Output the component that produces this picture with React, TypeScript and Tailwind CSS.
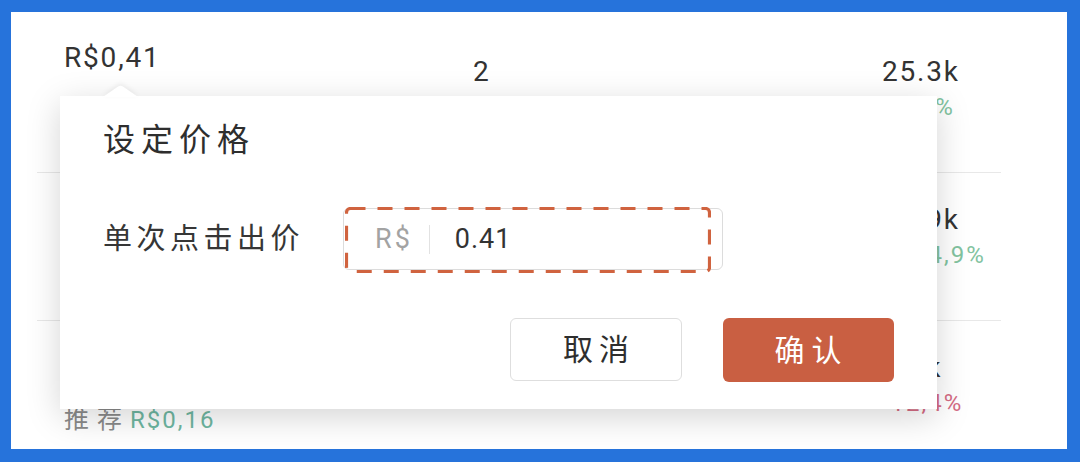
import React from "react";

type Row = {
  price: string;
  suggest: string;
  clicks: string;
  views: string;
  change: string;
  up: boolean;
};

const ROWS: Row[] = [
  { price: "R$0,41", suggest: "R$0,22", clicks: "2", views: "25.3k", change: "+4,2%", up: true },
  { price: "R$0,35", suggest: "R$0,19", clicks: "1", views: "13.9k", change: "+114,9%", up: true },
  { price: "R$0,30", suggest: "R$0,16", clicks: "0", views: "8.6k", change: "-12,4%", up: false },
];

function TableRow({ row }: { row: Row }) {
  return (
    <div className="flex h-[148px] border-b border-[#e8e8e8]">
      {/* Price column */}
      <div className="flex w-[436px] flex-col pl-[27px] pt-[16px]">
        <span className="text-[28px] leading-[34px] tracking-[1.8px] text-[#333]">{row.price}</span>
        <span className="mt-[35px] leading-[28px]">
          <span className="text-[25px] tracking-[8px] text-[#8a8a8a]">推荐</span>
          <span className="text-[24px] tracking-[2px] text-[#6fb7a2]">{row.suggest}</span>
        </span>
      </div>

      {/* Clicks column */}
      <div className="w-[409px] pt-[30px]">
        <span className="text-[28px] leading-[34px] text-[#333]">{row.clicks}</span>
      </div>

      {/* Impressions column */}
      <div className="flex flex-1 flex-col pt-[30px]">
        <span className="text-[28px] leading-[34px] tracking-[1.8px] text-[#333]">{row.views}</span>
        <span
          className={
            row.up
              ? "mt-[4px] text-[24px] leading-[28px] tracking-[2px] text-[#82c3a0]"
              : "mt-[4px] text-[24px] leading-[28px] tracking-[2px] text-[#d56c84]"
          }
        >
          {row.change}
        </span>
      </div>
    </div>
  );
}

function PricePopover() {
  return (
    <div className="absolute left-[49px] top-[84px] flex h-[313px] w-[877px] flex-col bg-white px-[43px] pt-[24px] shadow-[0_8px_32px_rgba(0,0,0,0.17)]">
      {/* Arrow */}
      <svg
        className="absolute left-[43px] top-[-11px] drop-shadow-[0_-2px_2px_rgba(0,0,0,0.06)]"
        width="35"
        height="12"
        viewBox="0 0 35 12"
      >
        <path d="M0 12 L15 1.5 Q17.5 0 20 1.5 L35 12 Z" fill="#fff" />
      </svg>

      <h2 className="h-[40px] text-[32px] font-normal leading-[40px] tracking-[6px] text-[#2e2e2e]">设定价格</h2>

      <div className="mt-[48px] flex h-[62px] items-center">
        <label className="w-[240px] text-[29px] leading-[36px] tracking-[4.5px] text-[#363636]">
          单次点击出价
        </label>
        <div className="relative flex h-[62px] w-[380px] items-center rounded-[6px] border border-[#dcdcdc] pl-[31px]">
          <span className="text-[27px] leading-[34px] tracking-[3px] text-[#a3a3a3]">R$</span>
          <span className="ml-[16px] h-[29px] w-px bg-[#e2e2e2]" />
          <span className="ml-[25px] text-[27px] leading-[34px] tracking-[1px] text-[#333]">0.41</span>

          {/* Annotation */}
          <svg
            className="pointer-events-none absolute left-[1px] top-[-2px]"
            width="366"
            height="66"
            viewBox="0 0 366 66"
          >
            <rect
              x="1.5"
              y="1.5"
              width="363"
              height="63"
              rx="4"
              fill="none"
              stroke="#d0633f"
              strokeWidth="3.2"
              strokeDasharray="15 12"
            />
          </svg>
        </div>
      </div>

      <div className="mt-[48px] flex justify-end gap-[41px]">
        <button className="flex h-[63px] w-[172px] items-center justify-center rounded-[6px] border border-[#dedede] bg-white pl-[6px] text-[30px] tracking-[6px] text-[#2e2e2e]">
          取消
        </button>
        <button className="flex h-[64px] w-[171px] items-center justify-center rounded-[6px] bg-[#c95f42] pl-[6px] text-[30px] tracking-[7px] text-white">
          确认
        </button>
      </div>
    </div>
  );
}

export default function App() {
  return (
    <div className="h-[462px] w-[1080px] bg-[#2673db] pb-[13px] pl-[11px] pr-[13px] pt-[12px] font-['Roboto','Noto_Sans_CJK_SC',sans-serif]">
      <div className="relative h-full overflow-hidden bg-white">
        <div className="ml-[26px] mt-[13px] w-[964px]">
          {ROWS.map((row) => (
            <TableRow key={row.views} row={row} />
          ))}
        </div>
        <PricePopover />
      </div>
    </div>
  );
}
